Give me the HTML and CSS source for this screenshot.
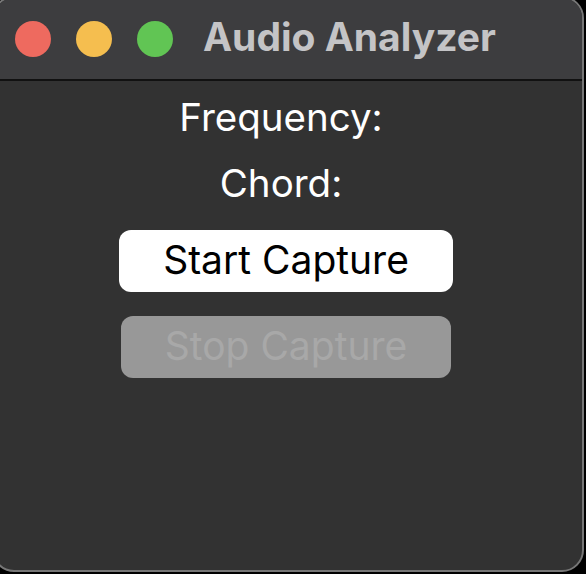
FILE: index.html
```html
<!DOCTYPE html>
<html lang="en">
<head>
  <meta charset="UTF-8" />
  <title>Audio Analyzer</title>
  <link rel="stylesheet" href="styles.css">
</head>
<body>

  <div class="window">
    <header class="titlebar">
      <div class="lights">
        <span class="light red"></span>
        <span class="light yellow"></span>
        <span class="light green"></span>
      </div>
      <h1>Audio Analyzer</h1>
    </header>

    <div class="content">
      <div class="label">Frequency:</div>
      <div class="label">Chord:</div>
      <button class="start-btn">Start Capture</button>
      <button class="stop-btn" disabled>Stop Capture</button>
    </div>
  </div>

</body>
</html>
```

FILE: styles.css
```css
html, body {
  margin: 0;
  padding: 0;
  background: #000;
  overflow: hidden;
  height: 574px;
}
.window {
  box-sizing: border-box;
  margin: -4px 0 0 -8px;
  width: 592px;
  height: 576px;
  background: #323232;
  border: 2px solid #767676;
  border-radius: 22px;
  overflow: hidden;
  font-family: 'Inter', 'Liberation Sans', sans-serif;
}
.titlebar {
  box-sizing: border-box;
  height: 83px;
  background: #3d3d3f;
  border-bottom: 2px solid #111;
  display: flex;
  align-items: center;
  padding: 0 0 0 21px;
}
.lights {
  display: flex;
  gap: 25px;
}
.light {
  width: 36px;
  height: 36px;
  border-radius: 50%;
  display: block;
}
.red { background: #ee6a5f; }
.yellow { background: #f5be4f; }
.green { background: #61c554; }
.titlebar h1 {
  margin: -4px 0 0 30px;
  font-size: 39px;
  font-weight: 700;
  color: #c4c4c6;
}
.content {
  display: flex;
  flex-direction: column;
  align-items: center;
  padding: 3px 4px 0 0;
}
.label {
  height: 66px;
  line-height: 66px;
  font-size: 38.5px;
  color: #fff;
  padding-right: 10px;
}
.start-btn,
.stop-btn {
  font-family: 'Inter', 'Liberation Sans', sans-serif;
  font-size: 39px;
  border: none;
  border-radius: 12px;
  height: 62px;
  padding: 0 0 3px;
}
.start-btn {
  margin-top: 14px;
  width: 334px;
  background: #fff;
  color: #000;
}
.stop-btn {
  margin-top: 24px;
  width: 330px;
  background: #989898;
  color: #a8a8a8;
}
```
